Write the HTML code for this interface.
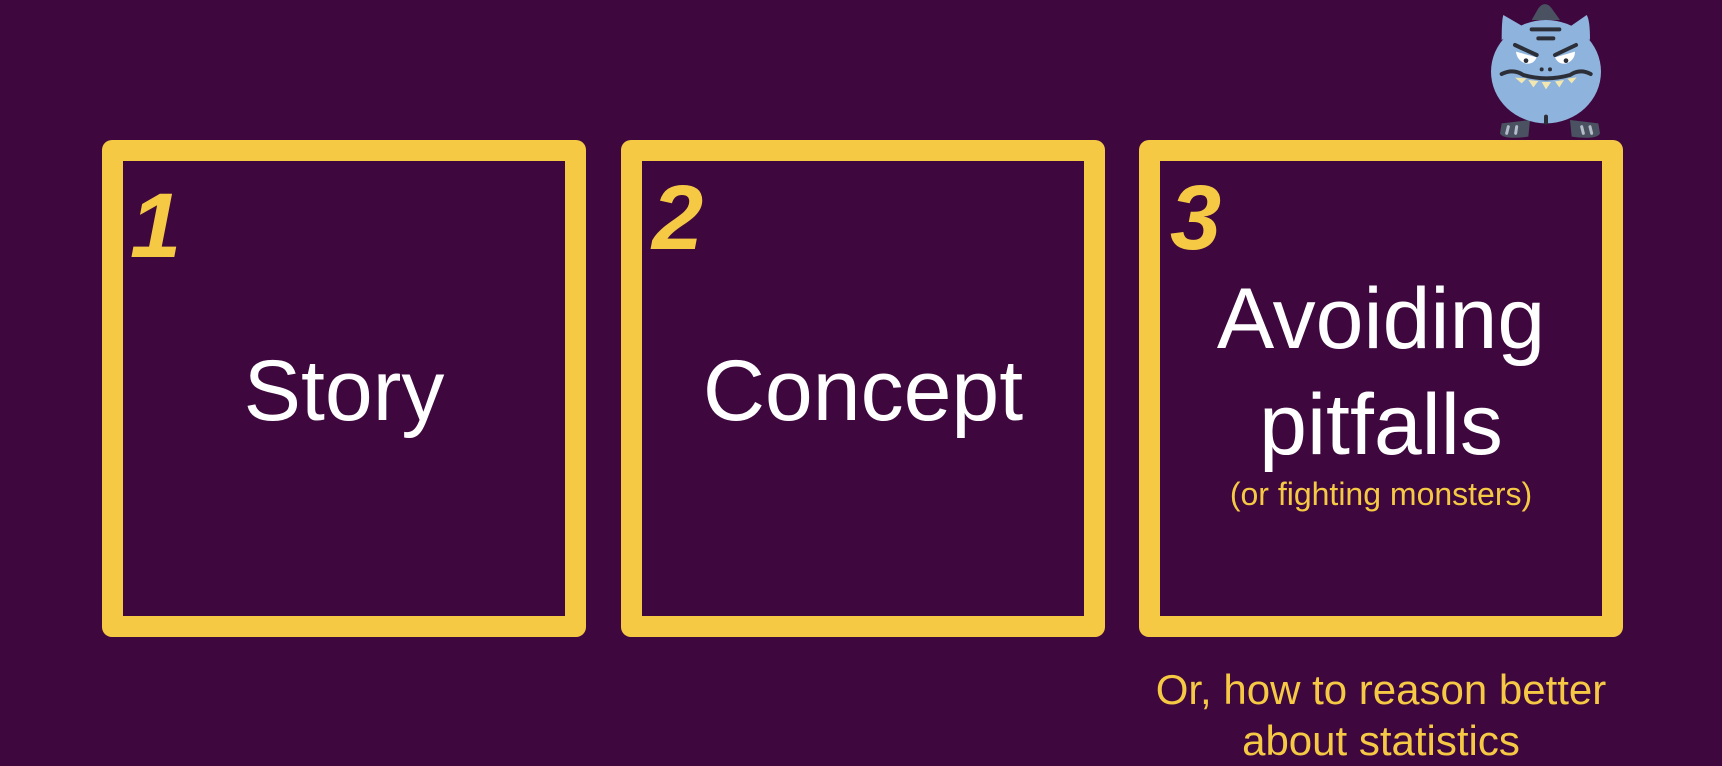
<!DOCTYPE html>
<html><head><style>
html,body{margin:0;padding:0}
body{width:1722px;height:766px;background:#3e083e;position:relative;overflow:hidden;font-family:"Liberation Sans",sans-serif}
.box{position:absolute;top:140px;width:442px;height:455px;border:21px solid #f6c945;border-radius:10px}
.num{position:absolute;color:#f6c945;font-weight:bold;font-style:italic;font-size:92px;line-height:1}
.t{position:absolute;color:#fff;text-align:center;font-size:86px;line-height:1}
.y{position:absolute;color:#f6c945;text-align:center}
</style></head><body>
<div class="box" style="left:102px"></div>
<div class="box" style="left:621px"></div>
<div class="box" style="left:1139px"></div>
<div class="num" style="left:130px;top:180px">1</div>
<div class="num" style="left:652px;top:172px">2</div>
<div class="num" style="left:1170px;top:172px">3</div>
<div class="t" style="left:102px;width:484px;top:348px">Story</div>
<div class="t" style="left:621px;width:484px;top:348px">Concept</div>
<div class="t" style="left:1139px;width:484px;top:276px">Avoiding</div>
<div class="t" style="left:1139px;width:484px;top:382px">pitfalls</div>
<div class="y" style="left:1139px;width:484px;top:476px;font-size:32px">(or fighting monsters)</div>
<div class="y" style="left:1100px;width:562px;top:664px;font-size:42px;line-height:51px">Or, how to reason better<br>about statistics</div>
<svg style="position:absolute;left:1470px;top:0" width="160" height="150" viewBox="0 0 480 450">
<path d="M205 25 Q225 0 245 25 L270 60 L185 60Z" fill="#4a5160"/>
<path d="M95 370 L90 400 Q100 420 175 410 L180 360Z" fill="#4a5160"/>
<path d="M385 370 L390 400 Q380 420 305 410 L300 360Z" fill="#4a5160"/>
<path d="M100 45 Q95 60 95 120 L160 80Z" fill="#8eb3dc"/>
<path d="M350 45 Q360 60 360 120 L300 80Z" fill="#8eb3dc"/>
<ellipse cx="228" cy="215" rx="165" ry="155" fill="#8eb3dc"/>
<g stroke="#2c2f38" stroke-width="12" stroke-linecap="round" fill="none">
<path d="M185 88H268M205 115H250M135 135L200 165M318 135L255 165"/>
<path d="M95 222Q130 205 160 225Q228 245 300 225Q330 205 362 222"/>
<path d="M228 350V368"/>
</g>
<path d="M138 155L200 172Q190 195 165 190Q140 180 138 155Z" fill="#fff"/>
<path d="M315 155L255 172Q265 195 290 190Q315 180 315 155Z" fill="#fff"/>
<circle cx="168" cy="182" r="7" fill="#2c2f38"/><circle cx="288" cy="182" r="7" fill="#2c2f38"/>
<circle cx="215" cy="208" r="6" fill="#2c2f38"/><circle cx="240" cy="208" r="6" fill="#2c2f38"/>
<path d="M135 233L155 250L170 235ZM175 240L190 262L205 243ZM215 246L228 268L243 246ZM255 244L268 262L282 240ZM292 236L305 250L320 232Z" fill="#f3e7b0"/>
<g stroke="#b5bdca" stroke-width="9" stroke-linecap="round"><path d="M115 380L110 400M140 380L137 400M335 380L340 400M360 380L365 400"/></g>
</svg>
</body></html>
